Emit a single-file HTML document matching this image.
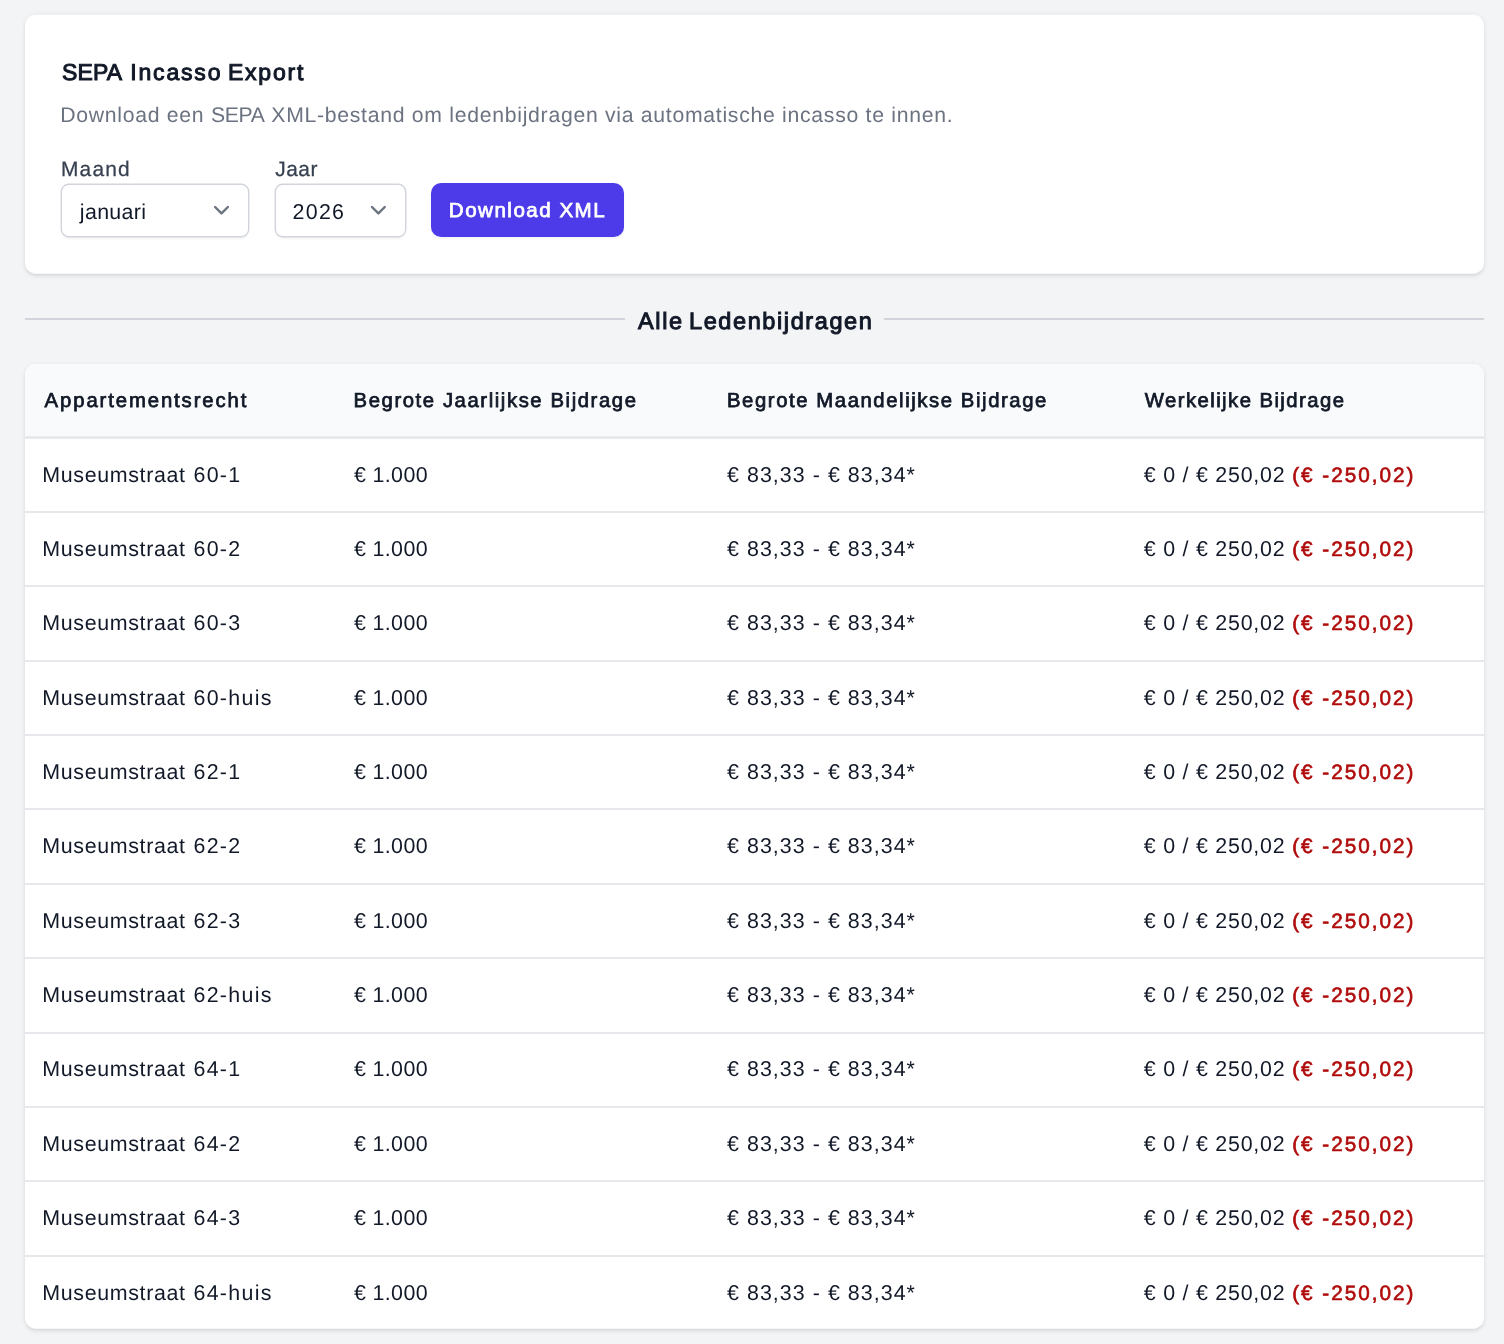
<!DOCTYPE html>
<html lang="nl">
<head>
<meta charset="utf-8">
<title>Ledenbijdragen</title>
<style>
  html, body { margin: 0; padding: 0; }
  body {
    width: 1504px; height: 1344px; overflow: hidden; position: relative;
    background: #f3f4f6; color: #111827;
    font-family: "Liberation Sans", sans-serif;
    -webkit-font-smoothing: antialiased; text-rendering: geometricPrecision;
  }
  #root { position: absolute; left: 0; top: 0; width: 1504px; height: 1344px; will-change: transform; }
  .abs { position: absolute; white-space: nowrap; }
  .card {
    position: absolute; left: 25px; width: 1459px;
    background: #fff; border-radius: 10.67px;
    box-shadow: 0 1.33px 4px rgba(0,0,0,.10), 0 1.33px 2.67px -1.33px rgba(0,0,0,.10), inset 0 -1px 0 rgba(0,0,0,.03);
  }
  /* ---------- export card ---------- */
  #export { top: 14px; height: 260px; box-shadow: 0 1.33px 4px rgba(0,0,0,.10), 0 1.33px 2.67px -1.33px rgba(0,0,0,.10), inset 0 -1px 0 rgba(0,0,0,.03), inset 0 1px 0 rgba(232,233,236,.6); }
  #export h2 {
    margin: 0; left: 37px; top: 38.4px; line-height: 40px;
    font-size: 23px; font-weight: normal; -webkit-text-stroke: 1px; letter-spacing: 1.82px; word-spacing: -2.6px; color: #111827;
  }
  #export p {
    margin: 0; left: 35.2px; top: 83.5px; line-height: 36px;
    font-size: 21.2px; letter-spacing: 0.72px; color: #6b7280;
  }
  label { font-size: 20.9px; line-height: 28px; color: #374151; letter-spacing: 0.9px; -webkit-text-stroke: 0.25px; }
  .sel {
    position: absolute; top: 171px; height: 51px; box-sizing: border-box;
    border: 0; border-radius: 6.7px; background: #fff;
    box-shadow: 0 0 0 1.4px #d1d5db, 0 2.6px 2.67px rgba(0,0,0,.05);
    font-size: 21.4px; letter-spacing: 0.4px; color: #111827;
  }
  .sel span { position: absolute; left: 17.8px; top: 2.3px; line-height: 50px; white-space: nowrap; }
  .sel svg { position: absolute; top: 9px; width: 32px; height: 32px; }
  #btn {
    position: absolute; left: 406px; top: 169px; width: 193px; height: 54.4px;
    border: 0; padding: 0; margin: 0; border-radius: 10px; background: #4d3bea; color: #fff;
    font-family: inherit; font-size: 20.6px; -webkit-text-stroke: 0.75px; letter-spacing: 1.47px;
    box-shadow: 0 1.33px 2.67px rgba(0,0,0,.05);
  }
  /* ---------- divider ---------- */
  #divider { position: absolute; left: 24.75px; width: 1459.25px; top: 318.3px; height: 1.33px; background: #d1d5db; }
  #divtitle {
    left: 624.7px; width: 259.3px; top: 298.5px; height: 44px; line-height: 44px; text-align: center; box-sizing: border-box; padding-left: 2.9px;
    background: #f3f4f6; font-size: 23.5px; -webkit-text-stroke: 1px; letter-spacing: 1.6px; word-spacing: -2.8px; color: #111827;
  }
  /* ---------- table ---------- */
  #table { top: 364px; height: 965px; overflow: hidden; }
  .thead { position: absolute; left: 0; top: 0; width: 100%; height: 72px; background: #f9fafb; }
  .thead::after { content: ""; position: absolute; left: 0; right: 0; top: 72px; height: 3px; background: linear-gradient(#eaecef 0 1px, #e5e7eb 1px 2px, #e8eaed 2px 3px); }
  .thead div { font-size: 20.3px; -webkit-text-stroke: 0.75px; letter-spacing: 1.58px; line-height: 30px; top: 22.3px; color: #111827; }
  .row { position: absolute; left: 0; width: 100%; height: 74.37px; box-sizing: border-box; border-top: 2px solid #e6e8ec; }
  .row div { font-size: 21.4px; line-height: 30px; top: 20.9px; letter-spacing: 1px; color: #111827; }
  .c1 { left: 17.3px; } .c2 { left: 329px; } .c3 { left: 702px; } .c4 { left: 1118.8px; }
  .thead .c1 { letter-spacing: 1.9px; left: 19.6px; } .thead .c2 { left: 328.6px; } .thead .c4 { letter-spacing: 1.44px; left: 1119.8px; } .thead .c3 { left: 702px; }
  .row .c1 { letter-spacing: 0.65px; word-spacing: 1.25px; } .row .c1 .n { letter-spacing: 1.3px; } .row .c2 { letter-spacing: 0.36px; } .row .c3 { letter-spacing: 1.05px; } .row .c4 { letter-spacing: 0.77px; }
  .neg { color: #b00c0c; font-size: 20.7px; -webkit-text-stroke: 0.65px; letter-spacing: 2.0px; margin-left: 0px; }
</style>
</head>
<body>
<div id="root">

<section class="card" id="export">
  <h2 class="abs"><span style="letter-spacing:0.15px;margin-right:2.4px">SEPA</span> Incasso Export</h2>
  <p class="abs">Download een <span style="letter-spacing:-0.3px">SEPA</span> XML-bestand om ledenbijdragen via automatische incasso te innen.</p>
  <label class="abs" style="left:36px;top:141.8px;letter-spacing:1.2px">Maand</label>
  <div class="sel" role="combobox" aria-label="Maand" style="left:37px;width:186px"><span style="letter-spacing:0.34px">januari</span>
    <svg viewBox="0 0 20 20" fill="none" style="left:143px"><path d="M6 8l4 4 4-4" transform="translate(0.31 0.125)" stroke="#6b7280" stroke-width="1.5" stroke-linecap="round" stroke-linejoin="round"/></svg>
  </div>
  <label class="abs" style="left:250.15px;top:141.8px;letter-spacing:0.55px">Jaar</label>
  <div class="sel" role="combobox" aria-label="Jaar" style="left:251px;width:129px"><span style="letter-spacing:1.28px;left:16.6px">2026</span>
    <svg viewBox="0 0 20 20" fill="none" style="left:86px"><path d="M6 8l4 4 4-4" transform="translate(0.23 0.125)" stroke="#6b7280" stroke-width="1.5" stroke-linecap="round" stroke-linejoin="round"/></svg>
  </div>
  <button id="btn" type="button"><span>Download XML</span></button>
</section>

<div id="divider"></div>
<div class="abs" id="divtitle"><span>Alle Ledenbijdragen</span></div>

<section class="card" id="table" role="table" aria-label="Alle Ledenbijdragen">
  <div class="thead" role="row">
    <div class="abs c1" role="columnheader">Appartementsrecht</div>
    <div class="abs c2" role="columnheader">Begrote Jaarlijkse Bijdrage</div>
    <div class="abs c3" role="columnheader">Begrote Maandelijkse Bijdrage</div>
    <div class="abs c4" role="columnheader">Werkelijke Bijdrage</div>
  </div>
  <div class="row" role="row" style="top:72.63px;border-top-color:transparent">
    <div class="abs c1" role="cell">Museumstraat <span class="n">60-1</span></div>
    <div class="abs c2" role="cell">€&nbsp;1.000</div>
    <div class="abs c3" role="cell">€&nbsp;83,33 - €&nbsp;83,34*</div>
    <div class="abs c4" role="cell"><span class="reg">€&nbsp;0 / €&nbsp;250,02</span> <span class="neg">(€&nbsp;-250,02)</span></div>
  </div>
  <div class="row" role="row" style="top:147.0px">
    <div class="abs c1" role="cell">Museumstraat <span class="n">60-2</span></div>
    <div class="abs c2" role="cell">€&nbsp;1.000</div>
    <div class="abs c3" role="cell">€&nbsp;83,33 - €&nbsp;83,34*</div>
    <div class="abs c4" role="cell"><span class="reg">€&nbsp;0 / €&nbsp;250,02</span> <span class="neg">(€&nbsp;-250,02)</span></div>
  </div>
  <div class="row" role="row" style="top:221.37px">
    <div class="abs c1" role="cell">Museumstraat <span class="n">60-3</span></div>
    <div class="abs c2" role="cell">€&nbsp;1.000</div>
    <div class="abs c3" role="cell">€&nbsp;83,33 - €&nbsp;83,34*</div>
    <div class="abs c4" role="cell"><span class="reg">€&nbsp;0 / €&nbsp;250,02</span> <span class="neg">(€&nbsp;-250,02)</span></div>
  </div>
  <div class="row" role="row" style="top:295.74px">
    <div class="abs c1" role="cell">Museumstraat <span class="n">60-huis</span></div>
    <div class="abs c2" role="cell">€&nbsp;1.000</div>
    <div class="abs c3" role="cell">€&nbsp;83,33 - €&nbsp;83,34*</div>
    <div class="abs c4" role="cell"><span class="reg">€&nbsp;0 / €&nbsp;250,02</span> <span class="neg">(€&nbsp;-250,02)</span></div>
  </div>
  <div class="row" role="row" style="top:370.11px">
    <div class="abs c1" role="cell">Museumstraat <span class="n">62-1</span></div>
    <div class="abs c2" role="cell">€&nbsp;1.000</div>
    <div class="abs c3" role="cell">€&nbsp;83,33 - €&nbsp;83,34*</div>
    <div class="abs c4" role="cell"><span class="reg">€&nbsp;0 / €&nbsp;250,02</span> <span class="neg">(€&nbsp;-250,02)</span></div>
  </div>
  <div class="row" role="row" style="top:444.48px">
    <div class="abs c1" role="cell">Museumstraat <span class="n">62-2</span></div>
    <div class="abs c2" role="cell">€&nbsp;1.000</div>
    <div class="abs c3" role="cell">€&nbsp;83,33 - €&nbsp;83,34*</div>
    <div class="abs c4" role="cell"><span class="reg">€&nbsp;0 / €&nbsp;250,02</span> <span class="neg">(€&nbsp;-250,02)</span></div>
  </div>
  <div class="row" role="row" style="top:518.85px">
    <div class="abs c1" role="cell">Museumstraat <span class="n">62-3</span></div>
    <div class="abs c2" role="cell">€&nbsp;1.000</div>
    <div class="abs c3" role="cell">€&nbsp;83,33 - €&nbsp;83,34*</div>
    <div class="abs c4" role="cell"><span class="reg">€&nbsp;0 / €&nbsp;250,02</span> <span class="neg">(€&nbsp;-250,02)</span></div>
  </div>
  <div class="row" role="row" style="top:593.22px">
    <div class="abs c1" role="cell">Museumstraat <span class="n">62-huis</span></div>
    <div class="abs c2" role="cell">€&nbsp;1.000</div>
    <div class="abs c3" role="cell">€&nbsp;83,33 - €&nbsp;83,34*</div>
    <div class="abs c4" role="cell"><span class="reg">€&nbsp;0 / €&nbsp;250,02</span> <span class="neg">(€&nbsp;-250,02)</span></div>
  </div>
  <div class="row" role="row" style="top:667.59px">
    <div class="abs c1" role="cell">Museumstraat <span class="n">64-1</span></div>
    <div class="abs c2" role="cell">€&nbsp;1.000</div>
    <div class="abs c3" role="cell">€&nbsp;83,33 - €&nbsp;83,34*</div>
    <div class="abs c4" role="cell"><span class="reg">€&nbsp;0 / €&nbsp;250,02</span> <span class="neg">(€&nbsp;-250,02)</span></div>
  </div>
  <div class="row" role="row" style="top:741.96px">
    <div class="abs c1" role="cell">Museumstraat <span class="n">64-2</span></div>
    <div class="abs c2" role="cell">€&nbsp;1.000</div>
    <div class="abs c3" role="cell">€&nbsp;83,33 - €&nbsp;83,34*</div>
    <div class="abs c4" role="cell"><span class="reg">€&nbsp;0 / €&nbsp;250,02</span> <span class="neg">(€&nbsp;-250,02)</span></div>
  </div>
  <div class="row" role="row" style="top:816.33px">
    <div class="abs c1" role="cell">Museumstraat <span class="n">64-3</span></div>
    <div class="abs c2" role="cell">€&nbsp;1.000</div>
    <div class="abs c3" role="cell">€&nbsp;83,33 - €&nbsp;83,34*</div>
    <div class="abs c4" role="cell"><span class="reg">€&nbsp;0 / €&nbsp;250,02</span> <span class="neg">(€&nbsp;-250,02)</span></div>
  </div>
  <div class="row" role="row" style="top:890.7px">
    <div class="abs c1" role="cell">Museumstraat <span class="n">64-huis</span></div>
    <div class="abs c2" role="cell">€&nbsp;1.000</div>
    <div class="abs c3" role="cell">€&nbsp;83,33 - €&nbsp;83,34*</div>
    <div class="abs c4" role="cell"><span class="reg">€&nbsp;0 / €&nbsp;250,02</span> <span class="neg">(€&nbsp;-250,02)</span></div>
  </div>
</section>

</div>
</body>
</html>
